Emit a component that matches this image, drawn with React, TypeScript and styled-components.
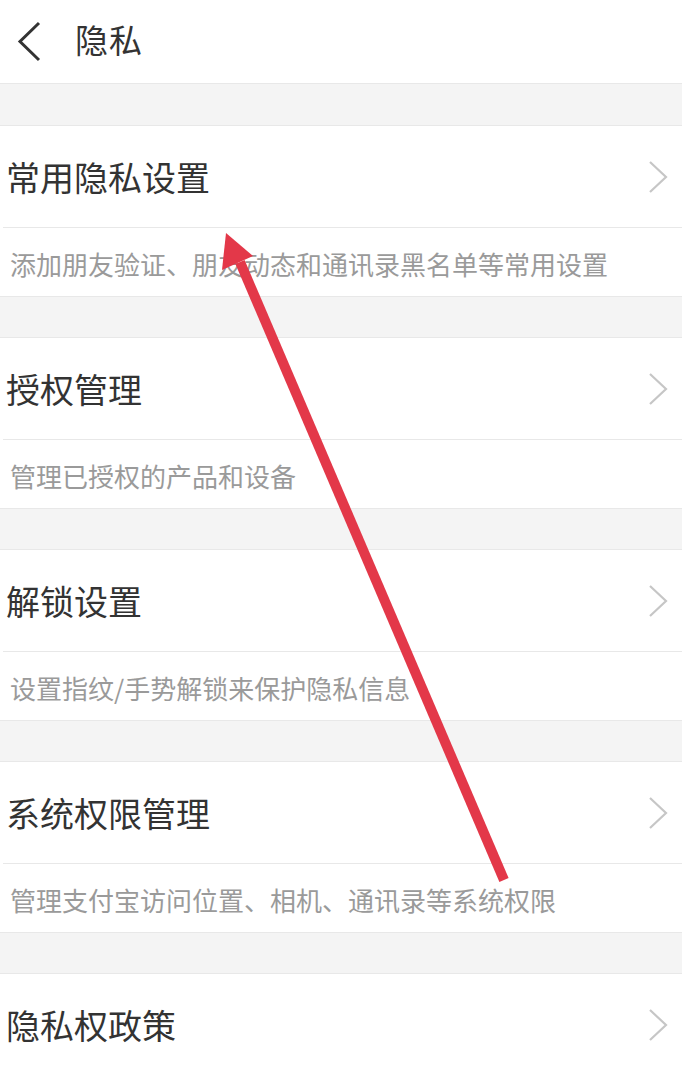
import React from "react";
import styled, { createGlobalStyle } from "styled-components";

const GlobalStyle = createGlobalStyle`
	html, body {
		margin: 0;
		padding: 0;
		background: #f4f4f4;
	}
	body {
		font-family: "Noto Sans CJK SC", "Noto Sans", sans-serif;
		-webkit-font-smoothing: antialiased;
	}
`;

type Item = {
	title: string;
	desc?: string;
};

const items: Item[] = [
	{ title: "常用隐私设置", desc: "添加朋友验证、朋友动态和通讯录黑名单等常用设置" },
	{ title: "授权管理", desc: "管理已授权的产品和设备" },
	{ title: "解锁设置", desc: "设置指纹/手势解锁来保护隐私信息" },
	{ title: "系统权限管理", desc: "管理支付宝访问位置、相机、通讯录等系统权限" },
	{ title: "隐私权政策" },
];

const Page = styled.div`
	position: relative;
	width: 682px;
	height: 1065px;
	overflow: hidden;
	background: #f4f4f4;
`;

const Header = styled.header`
	display: flex;
	align-items: center;
	height: 84px;
	box-sizing: border-box;
	background: #fff;
	border-bottom: 1px solid #e8e8e8;
	padding-left: 16px;

	h1 {
		margin: 0 0 6px 31px;
		font-size: 33px;
		font-weight: 400;
		color: #333;
		letter-spacing: 1px;
	}
`;

const List = styled.div`
	display: flex;
	flex-direction: column;
	gap: 40px;
	padding-top: 41px;
`;

const Section = styled.section`
	background: #fff;
	border-top: 1px solid #e8e8e8;
	border-bottom: 1px solid #e8e8e8;
`;

const TitleRow = styled.div<{ $divider: boolean }>`
	display: flex;
	align-items: center;
	justify-content: space-between;
	height: 102px;
	box-sizing: border-box;
	margin-left: 3px;
	padding: 0 12px 0 3px;
	border-bottom: 1px solid ${(p) => (p.$divider ? "#e8e8e8" : "transparent")};

	span {
		font-size: 34px;
		color: #333;
		margin-top: -1px;
	}
`;

const Desc = styled.div`
	display: flex;
	align-items: center;
	height: 68px;
	padding: 2px 0 0 10px;
	box-sizing: border-box;
	font-size: 26px;
	color: #9a9a9a;
`;

const Arrow = styled.svg`
	position: absolute;
	left: 0;
	top: 0;
	pointer-events: none;
`;

const BackIcon = () => (
	<svg width="28" height="42" viewBox="0 0 28 42">
		<path d="M23 2 L4 20.5 L23 39" fill="none" stroke="#333" strokeWidth="3" />
	</svg>
);

const Chevron = () => (
	<svg width="22" height="34" viewBox="0 0 22 34">
		<path d="M2 2 L18 17 L2 32" fill="none" stroke="#c6c6c6" strokeWidth="2.2" />
	</svg>
);

export default function App() {
	return (
		<Page>
			<GlobalStyle />
			<Header>
				<BackIcon />
				<h1>隐私</h1>
			</Header>
			<List>
				{items.map((it) => (
					<Section key={it.title}>
						<TitleRow $divider={!!it.desc}>
							<span>{it.title}</span>
							<Chevron />
						</TitleRow>
						{it.desc && <Desc>{it.desc}</Desc>}
					</Section>
				))}
			</List>
			<Arrow width="682" height="1065" viewBox="0 0 682 1065">
				<line x1="504" y1="880" x2="240" y2="262" stroke="#e33849" strokeWidth="10" strokeLinecap="butt" />
				<polygon points="226,233 253,256 222,270" fill="#e33849" />
			</Arrow>
		</Page>
	);
}
